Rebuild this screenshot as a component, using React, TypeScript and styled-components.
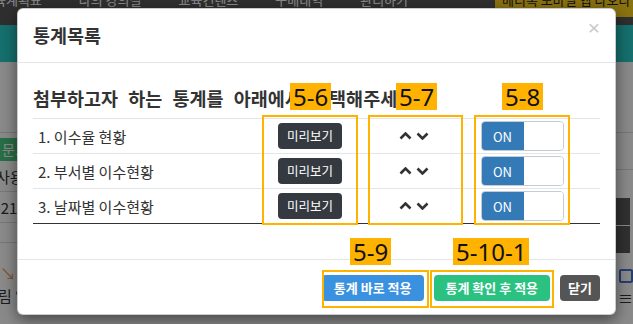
import React from "react";
import styled, { createGlobalStyle } from "styled-components";

const GlobalStyle = createGlobalStyle`
  html, body { margin: 0; padding: 0; }
  body { font-family: "Noto Sans CJK KR", "Noto Sans", sans-serif; background: #fff; }
  * { box-sizing: border-box; }
`;

const Page = styled.div`
  position: relative;
  width: 633px;
  height: 324px;
  overflow: hidden;
  background: #fff;
  display: flex;
  flex-direction: column;
`;

/* ---------- background page (behind the backdrop) ---------- */
const Nav = styled.div`
  height: 25px;
  flex: none;
  background: #575757;
  display: flex;
  align-items: flex-start;
  overflow: hidden;
`;
const NavList = styled.div`
  display: flex;
  gap: 37px;
  margin: -9px 0 0 -18px;
`;
const NavItem = styled.span`
  font-size: 13px;
  line-height: 18px;
  color: #fff;
  white-space: nowrap;
`;
const Banner = styled.div`
  margin-left: auto;
  width: 138px;
  height: 17px;
  background: #ffd21e;
  color: #222;
  font-size: 13px;
  line-height: 18px;
  padding-left: 7px;
  white-space: nowrap;
  overflow: hidden;
  & > span { display: block; margin-top: -9px; }
`;
const Hero = styled.div`
  height: 37px;
  flex: none;
  background: #27cfcc;
`;
const Content = styled.div`
  flex: 1;
  display: flex;
  justify-content: space-between;
`;
const SidePanel = styled.div<{ $align: "left" | "right" }>`
  width: 80px;
  display: flex;
  flex-direction: column;
  align-items: ${(p) => (p.$align === "left" ? "flex-start" : "flex-end")};
`;
const Gap = styled.div<{ $h: number; $line?: boolean }>`
  height: ${(p) => p.$h}px;
  width: 100%;
  flex: none;
  border-bottom: ${(p) => (p.$line ? "1px solid #ddd" : "none")};
`;
const Tag = styled.div`
  background: #4acc82;
  color: #fff;
  font-size: 14px;
  line-height: 23px;
  height: 23px;
  margin: 5px 0 0 -4px;
  padding: 0 6px;
  white-space: nowrap;
`;
const BgRow = styled.div<{ $shift: number }>`
  width: 100%;
  height: 31px;
  border-bottom: 1px solid #ddd;
  display: flex;
  align-items: center;
  font-size: 15px;
  color: #333;
  white-space: nowrap;
  text-indent: ${(p) => p.$shift}px;
`;
const DarkBlock = styled.div`
  width: 40px;
  height: 27px;
  margin: 0 3px 1px 0;
  background: #5a5a5a;
`;
const IconRow = styled.div`
  display: flex;
  gap: 3px;
  margin: 15px 0 0 0;
  align-items: center;
`;
const IconBox = styled.div<{ $blue?: boolean }>`
  width: 14px;
  height: 14px;
  border: 2px solid ${(p) => (p.$blue ? "#4a6fd0" : "#666")};
  border-radius: 2px;
`;
const Arrow = styled.span`
  color: #f0a060;
  font-size: 16px;
  margin: 22px 0 0 0;
  line-height: 16px;
`;
const Small = styled.div`
  font-size: 15px;
  color: #333;
  margin: 4px 0 0 -2px;
`;

const Backdrop = styled.div`
  position: absolute;
  inset: 0;
  background: rgba(0, 0, 0, 0.46);
`;

/* ---------- modal ---------- */
const Modal = styled.div`
  position: absolute;
  top: 8px;
  left: 17px;
  width: 599px;
  background: #fff;
  border: 1px solid rgba(0, 0, 0, 0.2);
  border-radius: 6px;
  box-shadow: 0 5px 15px rgba(0, 0, 0, 0.5);
  color: #333;
  font-family: "Noto Sans CJK KR", "Noto Sans", sans-serif;
`;
const Header = styled.div`
  display: flex;
  justify-content: space-between;
  align-items: flex-start;
  padding: 15px;
  border-bottom: 1px solid #e5e5e5;
`;
const Title = styled.h4`
  margin: 0;
  font-size: 18.5px;
  line-height: 23px;
  font-weight: 700;
  color: #333;
`;
const Close = styled.button`
  border: 0;
  background: none;
  padding: 0;
  margin-top: -7px;
  font-family: "Liberation Sans", sans-serif;
  font-size: 21px;
  line-height: 21px;
  color: #c9c9c9;
  cursor: pointer;
`;
const Body = styled.div`
  padding: 15px;
`;
const Lead = styled.h4`
  margin: 10px 0;
  font-size: 18.5px;
  line-height: 20px;
  font-weight: 700;
  word-spacing: 6px;
  color: #333;
  white-space: nowrap;
`;
const Table = styled.div`
  border-bottom: 1px solid #333;
  margin-bottom: 20px;
`;
const Row = styled.div`
  display: grid;
  grid-template-columns: 224px 106px 106px 106px 1fr;
  align-items: center;
  height: 35px;
  border-top: 1px solid #e3e6e8;
`;
const Cell = styled.div<{ $center?: boolean }>`
  display: flex;
  align-items: center;
  justify-content: ${(p) => (p.$center ? "center" : "flex-start")};
  padding-left: ${(p) => (p.$center ? 0 : 5)}px;
  font-size: 15px;
  color: #333;
  white-space: nowrap;
`;
const PreviewBtn = styled.button`
  height: 26px;
  padding: 0 9px;
  border: 0;
  border-radius: 4px;
  background: #343a40;
  color: #fff;
  font-family: inherit;
  font-size: 12.5px;
  line-height: 26px;
`;
const Sorter = styled.div`
  display: flex;
  gap: 4px;
  align-items: center;
  margin-left: -4px;
`;
const Toggle = styled.div`
  width: 83px;
  height: 30px;
  border: 1px solid #c5ccd4;
  border-radius: 4px;
  overflow: hidden;
  display: flex;
`;
const ToggleOn = styled.div`
  width: 42px;
  background: #337ab7;
  color: #fff;
  font-size: 13px;
  display: flex;
  align-items: center;
  justify-content: center;
`;
const ToggleOff = styled.div`
  flex: 1;
  background: #fff;
`;
const Footer = styled.div`
  display: flex;
  justify-content: flex-end;
  gap: 10px;
  padding: 15px 15px 13px;
  border-top: 1px solid #e5e5e5;
`;
const FooterBtn = styled.button<{ $tone: "blue" | "green" | "gray" }>`
  height: 26px;
  padding: 0 ${(p) => (p.$tone === "gray" ? 8 : 12)}px;
  border: 0;
  border-radius: 4px;
  color: #fff;
  font-family: inherit;
  font-size: 13px;
  font-weight: 700;
  line-height: 26px;
  background: ${(p) =>
    p.$tone === "blue" ? "#3a91e0" : p.$tone === "green" ? "#2bc281" : "#555"};
`;

/* ---------- annotation layer ---------- */
const Annot = styled.div<{ $x: number; $y: number; $w: number; $h: number }>`
  position: absolute;
  left: ${(p) => p.$x}px;
  top: ${(p) => p.$y}px;
  width: ${(p) => p.$w}px;
  height: ${(p) => p.$h}px;
  border: 2px solid #ffb300;
`;
const Label = styled.div<{ $x: number; $y: number }>`
  position: absolute;
  left: ${(p) => p.$x}px;
  top: ${(p) => p.$y}px;
  height: 27px;
  padding: 0 3px;
  background: #ffb300;
  color: #111;
  font-family: "Noto Sans", sans-serif;
  font-size: 24px;
  line-height: 27px;
  white-space: nowrap;
`;

const Chevron = ({ dir }: { dir: "up" | "down" }) => (
  <svg width="13" height="8" viewBox="0 0 13 8">
    <polyline
      points={dir === "up" ? "1.5,6.5 6.5,1.5 11.5,6.5" : "1.5,1.5 6.5,6.5 11.5,1.5"}
      fill="none"
      stroke="#333"
      strokeWidth="2.6"
    />
  </svg>
);

const stats = ["1. 이수율 현황", "2. 부서별 이수현황", "3. 날짜별 이수현황"];

export default function App() {
  return (
    <>
      <GlobalStyle />
      <Page>
        <Nav>
          <NavList>
            <NavItem>교육계획표</NavItem>
            <NavItem>나의 강의실</NavItem>
            <NavItem>교육컨텐츠</NavItem>
            <NavItem>구매내역</NavItem>
            <NavItem>관리하기</NavItem>
          </NavList>
          <Banner>
            <span>메디톡 모바일 앱 나오다</span>
          </Banner>
        </Nav>
        <Hero />
        <Content>
          <SidePanel $align="left">
            <Gap $h={71} $line />
            <Tag>문교육 신청</Tag>
            <BgRow $shift={-4}>사용자 교육</BgRow>
            <BgRow $shift={-16}>2021-05-01</BgRow>
            <Gap $h={20} $line />
            <Arrow>↘</Arrow>
            <Small>림 알림</Small>
          </SidePanel>
          <SidePanel $align="right">
            <Gap $h={71} $line />
            <Gap $h={37} $line />
            <Gap $h={28} />
            <DarkBlock />
            <DarkBlock />
            <IconRow>
              <IconBox />
              <IconBox $blue />
            </IconRow>
            <Small>≡ ≡</Small>
          </SidePanel>
        </Content>
        <Backdrop />
        <Modal>
          <Header>
            <Title>통계목록</Title>
            <Close>×</Close>
          </Header>
          <Body>
            <Lead>첨부하고자 하는 통계를 아래에서 선택해주세요</Lead>
            <Table>
              {stats.map((s) => (
                <Row key={s}>
                  <Cell>{s}</Cell>
                  <Cell $center>
                    <PreviewBtn>미리보기</PreviewBtn>
                  </Cell>
                  <Cell $center>
                    <Sorter>
                      <Chevron dir="up" />
                      <Chevron dir="down" />
                    </Sorter>
                  </Cell>
                  <Cell $center>
                    <Toggle>
                      <ToggleOn>ON</ToggleOn>
                      <ToggleOff />
                    </Toggle>
                  </Cell>
                  <Cell />
                </Row>
              ))}
            </Table>
          </Body>
          <Footer>
            <FooterBtn $tone="blue">통계 바로 적용</FooterBtn>
            <FooterBtn $tone="green">통계 확인 후 적용</FooterBtn>
            <FooterBtn $tone="gray">닫기</FooterBtn>
          </Footer>
        </Modal>
        <Annot $x={262} $y={115} $w={96} $h={110} />
        <Annot $x={368} $y={115} $w={95} $h={110} />
        <Annot $x={474} $y={115} $w={96} $h={110} />
        <Annot $x={322} $y={270} $w={107} $h={38} />
        <Annot $x={430} $y={270} $w={124} $h={38} />
        <Label $x={290} $y={83}>5-6</Label>
        <Label $x={396} $y={83}>5-7</Label>
        <Label $x={502} $y={83}>5-8</Label>
        <Label $x={350} $y={238}>5-9</Label>
        <Label $x={453} $y={238}>5-10-1</Label>
      </Page>
    </>
  );
}
